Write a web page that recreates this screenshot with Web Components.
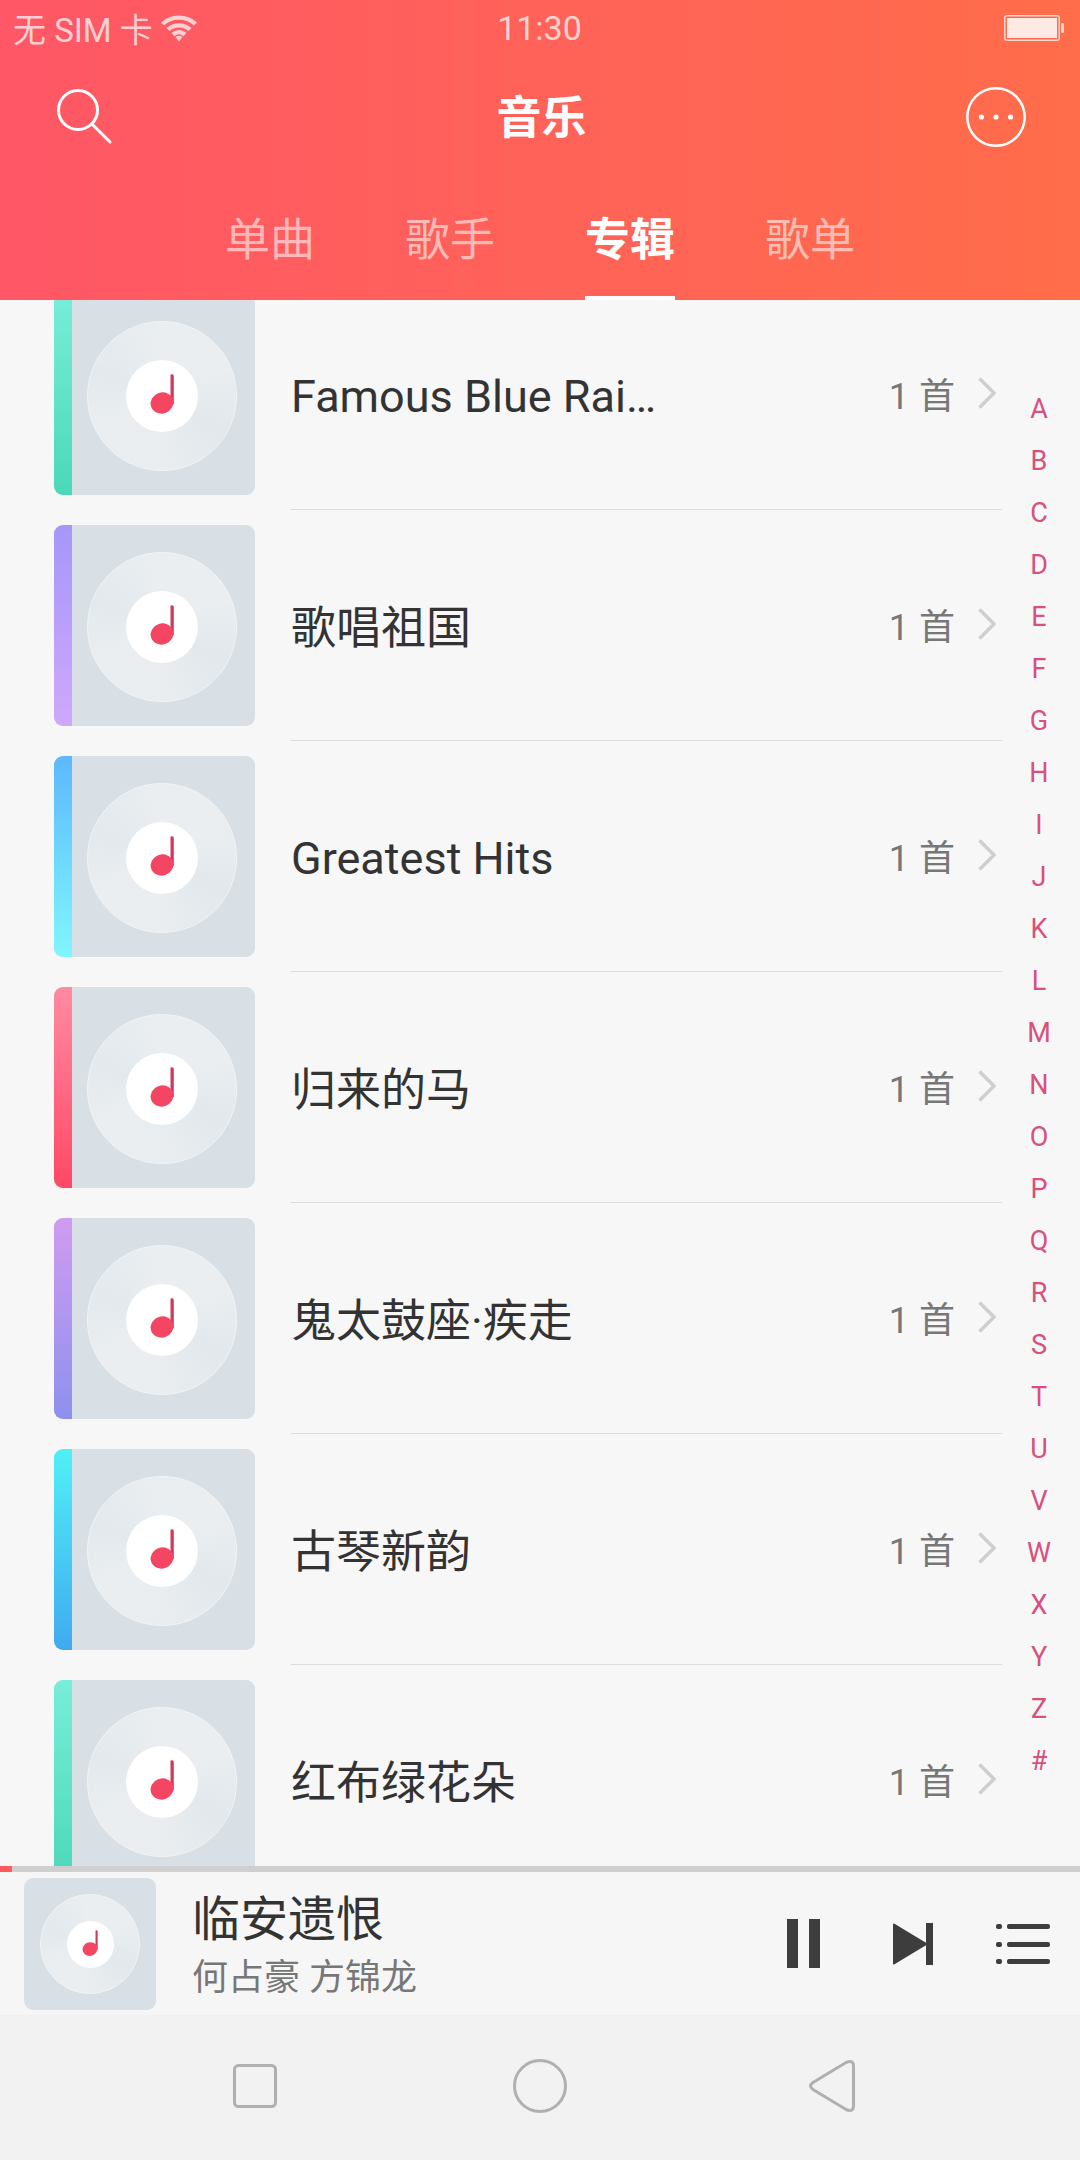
<!DOCTYPE html>
<html lang="zh">
<head>
<meta charset="utf-8">
<title>音乐</title>
<style>
  html, body { margin: 0; padding: 0; }
  body {
    width: 1080px;
    height: 2160px;
    overflow: hidden;
    display: flex;
    flex-direction: column;
    background: #f7f7f7;
    font-family: Roboto, "Noto Sans CJK SC", sans-serif;
  }
</style>
</head>
<body>
  <app-header>
    <status-bar></status-bar>
    <title-bar>音乐</title-bar>
    <tab-bar>
      <tab-item>单曲</tab-item>
      <tab-item>歌手</tab-item>
      <tab-item active>专辑</tab-item>
      <tab-item>歌单</tab-item>
    </tab-bar>
  </app-header>

  <album-list>
    <album-row from="#78eed8" to="#4bd8b8">Famous Blue Raincoat Songs</album-row>
    <album-row cjk from="#a597fa" to="#cfa8fc">歌唱祖国</album-row>
    <album-row from="#5cb8fc" to="#80f6ff">Greatest Hits</album-row>
    <album-row cjk from="#ff8ba2" to="#ff4865">归来的马</album-row>
    <album-row cjk from="#cf9cf0" to="#8e90ee">鬼太鼓座·疾走</album-row>
    <album-row cjk from="#50f0f6" to="#40aaf0">古琴新韵</album-row>
    <album-row cjk from="#78eed8" to="#4bd8b8">红布绿花朵</album-row>
    <alpha-index slot="index"></alpha-index>
  </album-list>

  <now-playing title="临安遗恨" artist="何占豪 方锦龙"></now-playing>
  <nav-bar></nav-bar>

<script>
class AppHeader extends HTMLElement {
  constructor() {
    super()
    this.attachShadow({ mode: 'open' }).innerHTML = `
      <style>
        :host {
          display: flex;
          flex-direction: column;
          height: 300px;
          flex: none;
          color: #fff;
          background: linear-gradient(90deg, #ff5767, #ff6d4a);
          position: relative;
          z-index: 2;
        }
      </style>
      <slot></slot>`
  }
}

class StatusBar extends HTMLElement {
  constructor() {
    super()
    this.attachShadow({ mode: 'open' }).innerHTML = `
      <style>
        :host {
          display: grid;
          grid-template-columns: 1fr auto 1fr;
          align-items: center;
          height: 56px;
          padding: 0 16px 0 13px;
          font-size: 34px;
          color: rgba(255, 255, 255, .72);
        }
        .left { display: flex; align-items: center; gap: 7px; font-size: 33px; }
        .time { margin-left: 2px; }
        .right { display: flex; justify-content: flex-end; }
        svg { display: block; }
      </style>
      <div class="left">
        <span>无 SIM 卡</span>
        <svg width="38" height="28" viewBox="0 0 38 28" fill="none" stroke="currentColor" stroke-width="4.4">
          <path d="M2.5 10C11.5 1.5 26.5 1.5 35.5 10"/>
          <path d="M8 15.5C14 10 24 10 30 15.5"/>
          <path d="M13 20.5C16.5 17.5 21.5 17.5 25 20.5"/>
          <path d="M15.5 23L19 27.5L22.5 23Q19 20.5 15.5 23Z" fill="currentColor" stroke="none"/>
        </svg>
      </div>
      <span class="time">11:30</span>
      <div class="right">
        <svg width="60" height="26" viewBox="0 0 60 26">
          <rect x=".75" y=".75" width="54.5" height="24.5" rx="2" fill="none" stroke="currentColor" stroke-width="1.5"/>
          <rect x="3" y="3" width="50" height="20" fill="#fff" fill-opacity=".85"/>
          <rect x="57" y="8" width="3" height="10" rx="1" fill="currentColor"/>
        </svg>
      </div>`
  }
}

class TitleBar extends HTMLElement {
  constructor() {
    super()
    this.attachShadow({ mode: 'open' }).innerHTML = `
      <style>
        :host {
          display: grid;
          grid-template-columns: 1fr auto 1fr;
          align-items: center;
          height: 122px;
          padding: 0 54px 0 57px;
          font-size: 45px;
          font-weight: 700;
        }
        svg { display: block; }
        .name { margin-top: -6px; }
        .more { justify-self: end; }
      </style>
      <svg width="56" height="56" viewBox="0 0 56 56" fill="none" stroke="#fff" stroke-width="3">
        <circle cx="21" cy="21" r="19.5"/>
        <path d="M35 35L53 53" stroke-linecap="round"/>
      </svg>
      <div class="name"><slot></slot></div>
      <svg class="more" width="60" height="60" viewBox="0 0 60 60" fill="none" stroke="#fff" stroke-width="2.5">
        <circle cx="30" cy="30" r="28.7"/>
        <g fill="#fff" stroke="none">
          <circle cx="15.5" cy="30" r="2.6"/>
          <circle cx="30" cy="30" r="2.6"/>
          <circle cx="44.5" cy="30" r="2.6"/>
        </g>
      </svg>`
  }
}

class TabBar extends HTMLElement {
  constructor() {
    super()
    this.attachShadow({ mode: 'open' }).innerHTML = `
      <style>
        :host {
          display: flex;
          justify-content: center;
          gap: 90px;
          height: 122px;
        }
      </style>
      <slot></slot>`
  }
}

class TabItem extends HTMLElement {
  constructor() {
    super()
    this.attachShadow({ mode: 'open' }).innerHTML = `
      <style>
        :host {
          display: flex;
          align-items: center;
          box-sizing: border-box;
          height: 122px;
          padding-bottom: 1px;
          font-size: 45px;
          color: rgba(255, 255, 255, .58);
          border-bottom: 4px solid transparent;
        }
        :host([active]) {
          color: #fff;
          font-weight: 700;
          border-bottom-color: #fff;
        }
      </style>
      <slot></slot>`
  }
}

class AlbumList extends HTMLElement {
  constructor() {
    super()
    this.attachShadow({ mode: 'open' }).innerHTML = `
      <style>
        :host {
          display: block;
          flex: 1;
          min-height: 0;
          position: relative;
          overflow: hidden;
        }
        /* list is scrolled a little, first cover slides under the header */
        .scroll { margin-top: -21px; }
      </style>
      <div class="scroll"><slot></slot></div>
      <slot name="index"></slot>`
  }
}

class AlbumRow extends HTMLElement {
  constructor() {
    super()
    const from = this.getAttribute('from')
    const to = this.getAttribute('to')
    this.attachShadow({ mode: 'open' }).innerHTML = `
      <style>
        :host {
          display: flex;
          align-items: center;
          height: 231px;
          padding: 0 78px 0 54px;
        }
        album-cover { flex: none; }
        .body {
          flex: 1;
          min-width: 0;
          align-self: stretch;
          box-sizing: border-box;
          margin-left: 36px;
          padding-top: 5px;
          display: flex;
          align-items: center;
          border-bottom: 1px solid #dcdcdc;
        }
        .name {
          flex: none;
          width: 366px;
          font-size: 45px;
          color: #333;
          white-space: nowrap;
          overflow: hidden;
          text-overflow: ellipsis;
        }
        /* CJK glyphs sit lower in the line than latin ones */
        :host([cjk]) .name { margin-bottom: 7px; }
        .count {
          margin-left: auto;
          margin-bottom: 7px;
          font-size: 36px;
          color: #777;
          word-spacing: 1px;
        }
        svg { display: block; margin: -7px 6px 0 23px; }
      </style>
      <album-cover from="${from}" to="${to}"></album-cover>
      <div class="body">
        <div class="name"><slot></slot></div>
        <span class="count">1 首</span>
        <svg width="18" height="32" viewBox="0 0 18 32" fill="none" stroke="#cfcfcf" stroke-width="3.5">
          <path d="M1.5 1.5L16 16L1.5 30.5"/>
        </svg>
      </div>`
  }
}

class AlbumCover extends HTMLElement {
  constructor() {
    super()
    const from = this.getAttribute('from')
    const to = this.getAttribute('to')
    const strip = from ? `<div class="strip" style="background:linear-gradient(${from},${to})"></div>` : ''
    this.attachShadow({ mode: 'open' }).innerHTML = `
      <style>
        :host {
          display: flex;
          width: 201px;
          height: 201px;
          border-radius: 9px;
          overflow: hidden;
          background: #d8e0e6;
        }
        :host([mini]) { width: 132px; height: 132px; }
        .strip { flex: none; width: 18px; }
        .area {
          flex: 1;
          display: flex;
          align-items: center;
          justify-content: center;
          padding: 2px 3px 0 0;
        }
        :host([mini]) .area { padding: 1px 0 0 0; }
        .disc {
          display: flex;
          align-items: center;
          justify-content: center;
          box-sizing: border-box;
          width: 150px;
          height: 150px;
          border-radius: 50%;
          border: 1px solid #f1f4f6;
          background: conic-gradient(#eaeef1 0 60deg, #e2e8ec 120deg, #e9edf0 180deg, #eaeef1 240deg, #e3e9ed 290deg, #eaeef1 360deg);
        }
        :host([mini]) .disc { width: 100px; height: 100px; }
        .hole {
          display: flex;
          align-items: center;
          justify-content: center;
          width: 72px;
          height: 72px;
          border-radius: 50%;
          background: #fff;
        }
        :host([mini]) .hole { width: 47px; height: 47px; }
        svg { display: block; width: 40px; height: 44px; }
        :host([mini]) svg { width: 26px; height: 29px; }
      </style>
      ${strip}
      <div class="area">
        <div class="disc">
          <div class="hole">
            <svg viewBox="0 0 40 44">
              <path d="M28.500 0.500Q31.800 -0.500 31.800 2V30H28.500Z" fill="#cf3c5b"/>
              <ellipse cx="20" cy="29" rx="11.500" ry="10.500" transform="rotate(-18 20 29)" fill="#f44662"/>
            </svg>
          </div>
        </div>
      </div>`
  }
}

class AlphaIndex extends HTMLElement {
  constructor() {
    super()
    const letters = 'ABCDEFGHIJKLMNOPQRSTUVWXYZ#'.split('')
    this.attachShadow({ mode: 'open' }).innerHTML = `
      <style>
        :host {
          display: flex;
          flex-direction: column;
          position: absolute;
          top: 83px;
          right: 11px;
          width: 60px;
          font-size: 27px;
          color: #d8507c;
          text-align: center;
        }
        div { height: 52px; line-height: 52px; }
      </style>
      ${letters.map(l => `<div>${l}</div>`).join('')}`
  }
}

class NowPlaying extends HTMLElement {
  constructor() {
    super()
    this.attachShadow({ mode: 'open' }).innerHTML = `
      <style>
        :host {
          display: block;
          flex: none;
          height: 149px;
          background: #f6f6f6;
        }
        .progress { height: 6px; background: #cfcfcf; }
        .progress div { width: 12px; height: 100%; background: #ff5a5f; }
        .main {
          display: flex;
          align-items: center;
          height: 143px;
          padding: 0 30px 0 24px;
        }
        .text { margin-left: 36px; flex: 1; padding-top: 7px; }
        .title { font-size: 48px; line-height: 58px; color: #333; }
        .artist { font-size: 36px; line-height: 50px; color: #777; margin-top: 4px; }
        svg { display: block; flex: none; }
        .pause { margin-right: 73px; }
        .next { margin-right: 63px; }
      </style>
      <div class="progress"><div></div></div>
      <div class="main">
        <album-cover mini></album-cover>
        <div class="text">
          <div class="title">${this.getAttribute('title')}</div>
          <div class="artist">${this.getAttribute('artist')}</div>
        </div>
        <svg class="pause" width="33" height="49" viewBox="0 0 33 49" fill="#3d3d3d">
          <rect width="11" height="49"/>
          <rect x="22" width="11" height="49"/>
        </svg>
        <svg class="next" width="40" height="42" viewBox="0 0 40 42" fill="#3d3d3d">
          <path d="M0 1.5Q0 0 1.5 .7L35 21L1.5 41.3Q0 42 0 40.5Z"/>
          <rect x="33" width="7" height="42"/>
        </svg>
        <svg width="54" height="40" viewBox="0 0 54 40" fill="#3d3d3d">
          <rect y="0" width="6" height="5" rx="2"/>
          <rect x="11" y="0" width="43" height="5" rx="2"/>
          <rect y="18" width="6" height="5" rx="2"/>
          <rect x="11" y="18" width="43" height="5" rx="2"/>
          <rect y="35" width="6" height="5" rx="2"/>
          <rect x="11" y="35" width="43" height="5" rx="2"/>
        </svg>
      </div>`
  }
}

class NavBar extends HTMLElement {
  constructor() {
    super()
    this.attachShadow({ mode: 'open' }).innerHTML = `
      <style>
        :host {
          display: flex;
          align-items: center;
          flex: none;
          height: 145px;
          box-sizing: border-box;
          padding: 0 0 3px 233px;
          background: #f2f2f2;
        }
        svg { display: block; flex: none; }
        .circle { margin-left: 236px; }
        .back { margin-left: 242px; }
      </style>
      <svg width="44" height="44" viewBox="0 0 44 44" fill="none" stroke="#b0b0b0" stroke-width="3">
        <rect x="1.5" y="1.5" width="41" height="41" rx="4"/>
      </svg>
      <svg class="circle" width="54" height="54" viewBox="0 0 54 54" fill="none" stroke="#b0b0b0" stroke-width="3">
        <circle cx="27" cy="27" r="25.5"/>
      </svg>
      <svg class="back" width="46" height="52" viewBox="0 0 46 52" fill="none" stroke="#b0b0b0" stroke-width="3">
        <path d="M4 22.500L37 2.500Q44.500 -0.500 44.500 6V46Q44.500 52.500 37 49.500L4 29.500Q-1 26 4 22.500Z"/>
      </svg>`
  }
}

customElements.define('album-cover', AlbumCover)
customElements.define('app-header', AppHeader)
customElements.define('status-bar', StatusBar)
customElements.define('title-bar', TitleBar)
customElements.define('tab-bar', TabBar)
customElements.define('tab-item', TabItem)
customElements.define('album-list', AlbumList)
customElements.define('album-row', AlbumRow)
customElements.define('alpha-index', AlphaIndex)
customElements.define('now-playing', NowPlaying)
customElements.define('nav-bar', NavBar)
</script>
</body>
</html>
